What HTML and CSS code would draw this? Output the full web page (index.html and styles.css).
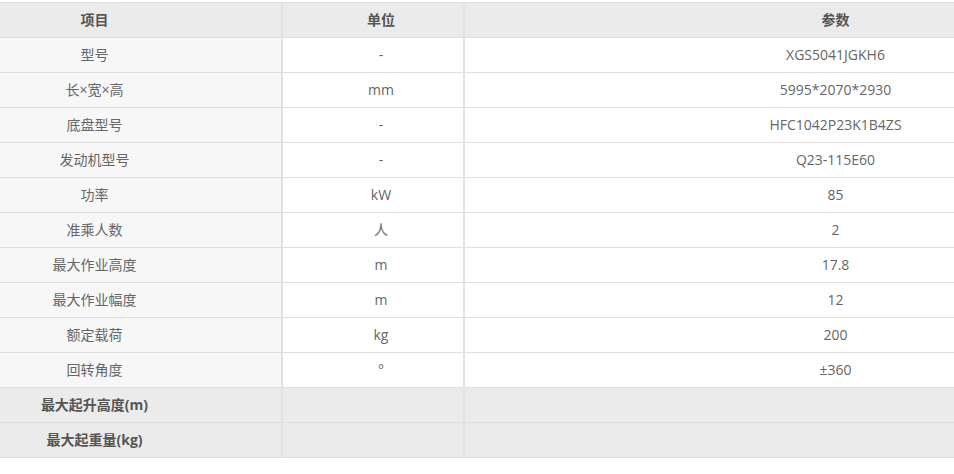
FILE: index.html
```html
<!DOCTYPE html>
<html lang="zh">
<head>
<meta charset="utf-8">
<link rel="stylesheet" href="styles.css">
</head>
<body>
<div class="wrap">
<table class="spec">
<colgroup><col class="c1"><col class="c2"><col class="c3"></colgroup>
<thead>
<tr><th class="k">项目</th><th class="u">单位</th><th class="v">参数</th></tr>
</thead>
<tbody>
<tr><td class="k">型号</td><td class="u">-</td><td class="v">XGS5041JGKH6</td></tr>
<tr><td class="k">长×宽×高</td><td class="u">mm</td><td class="v">5995*2070*2930</td></tr>
<tr><td class="k">底盘型号</td><td class="u">-</td><td class="v">HFC1042P23K1B4ZS</td></tr>
<tr><td class="k">发动机型号</td><td class="u">-</td><td class="v">Q23-115E60</td></tr>
<tr><td class="k">功率</td><td class="u">kW</td><td class="v">85</td></tr>
<tr><td class="k">准乘人数</td><td class="u">人</td><td class="v">2</td></tr>
<tr><td class="k">最大作业高度</td><td class="u">m</td><td class="v">17.8</td></tr>
<tr><td class="k">最大作业幅度</td><td class="u">m</td><td class="v">12</td></tr>
<tr><td class="k">额定载荷</td><td class="u">kg</td><td class="v">200</td></tr>
<tr><td class="k">回转角度</td><td class="u">°</td><td class="v">±360</td></tr>
<tr class="gray"><td class="k">最大起升高度(m)</td><td class="u"></td><td class="v"></td></tr>
<tr class="gray"><td class="k">最大起重量(kg)</td><td class="u"></td><td class="v"></td></tr>
</tbody>
</table>
</div>
</body>
</html>
```

FILE: styles.css
```css
html, body {
  margin: 0;
  padding: 0;
  background: #fff;
}
.wrap {
  padding-top: 2px;
  overflow: hidden;
}
.spec {
  width: 954px;
  table-layout: fixed;
  border-collapse: collapse;
  font-family: "Open Sans", "Noto Sans CJK SC", sans-serif;
  font-size: 14px;
  color: #666;
  border-top: 1px solid #dedede;
}
.c1 { width: 282px; }
.c2 { width: 182px; }
.spec th, .spec td {
  height: 33px;
  padding: 0 0 1px 0;
  text-align: center;
  vertical-align: middle;
  border-bottom: 1px solid #dedede;
  line-height: 20px;
}
.spec th {
  background: #ebebeb;
  font-weight: bold;
  color: #555;
}
.spec .k {
  padding-right: 92px;
  border-right: 2px solid #e2e2e2;
}
.spec .u {
  padding-left: 16px;
  border-right: 2px solid #e2e2e2;
}
.spec .v {
  padding-left: 252px;
}
.spec td.k {
  background: #f7f7f7;
}
.spec tr.gray td {
  background: #ebebeb;
}
.spec tr.gray td.k {
  font-weight: bold;
  color: #555;
}
```
